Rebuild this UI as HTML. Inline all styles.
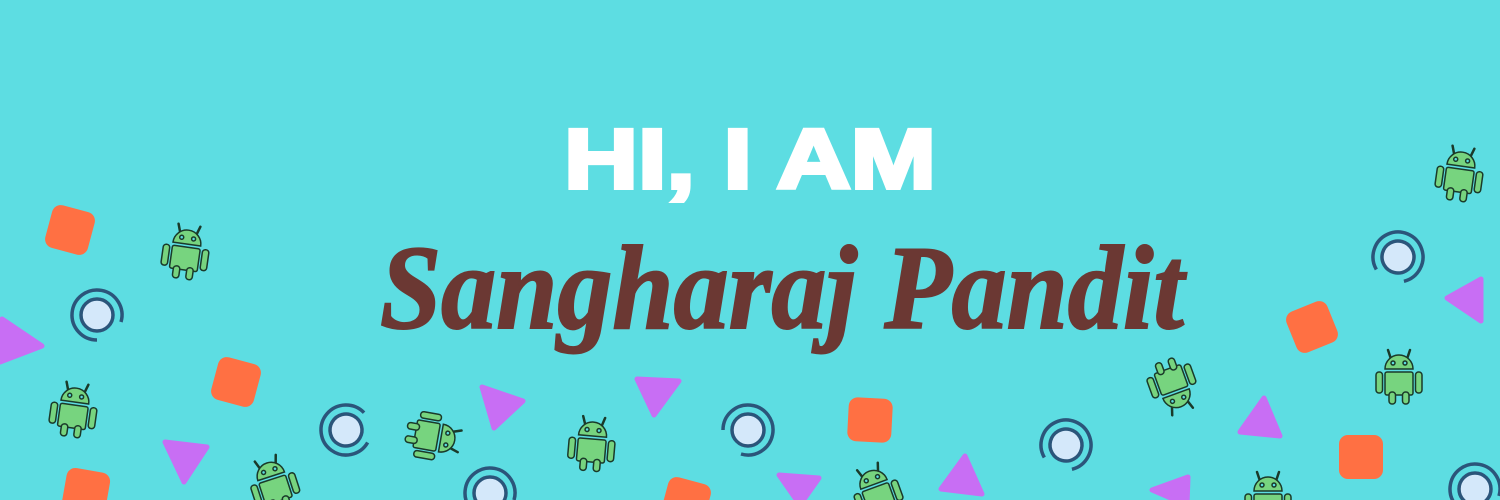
<!DOCTYPE html>
<html><head><meta charset="utf-8"><style>
html,body{margin:0;padding:0;width:1500px;height:500px;overflow:hidden;background:#5ddde2}
svg{display:block;overflow:hidden}
</style></head><body>
<svg width="1500" height="500" viewBox="0 0 1500 500" xmlns="http://www.w3.org/2000/svg">
<defs>
<g id="and" fill="#77d47f" stroke="#1a3a2a" stroke-width="1.5">
  <line x1="-8" y1="-16" x2="-11" y2="-25" stroke-linecap="round" stroke-width="2.5"/>
  <line x1="8" y1="-16" x2="11" y2="-25" stroke-linecap="round" stroke-width="2.5"/>
  <path d="M-14,-6 A14,14 0 0 1 14,-6 Z"/>
  <circle cx="-6" cy="-12" r="2" fill="#5ddde2"/>
  <circle cx="6" cy="-12" r="2" fill="#5ddde2"/>
  <rect x="-14" y="-3" width="28" height="23" rx="2"/>
  <rect x="-23" y="-3" width="6.5" height="21" rx="3"/>
  <rect x="16.5" y="-3" width="6.5" height="21" rx="3"/>
  <rect x="-10" y="17" width="6.5" height="12" rx="3"/>
  <rect x="3.5" y="17" width="6.5" height="12" rx="3"/>
</g>
<g id="sq"><rect x="-22" y="-22" width="44" height="44" rx="9" fill="#ff7043"/></g>
<g id="ring" fill="none" stroke="#2b557a" stroke-width="3.5">
  <path d="M0,25 A25,25 0 1 1 24,7"/>
  <circle r="16" fill="#d4e8fa"/>
</g>
</defs>

<g fill="#c86ef4" stroke="#c86ef4" stroke-width="5" stroke-linejoin="round">
  <path d="M2,319 L42,346 L0,362 Z"/>
  <path d="M165,442 L207,447 L184,482 Z"/>
  <path d="M482,387 L523,401 L494,428 Z"/>
  <path d="M637,379 L679,381 L654,415 Z"/>
  <path d="M779,475 L819,478 L800,505 Z"/>
  <path d="M965,456 L982,494 L941,489 Z"/>
  <path d="M1188,477 L1152,490 L1187,505 Z"/>
  <path d="M1264,398 L1280,436 L1240,432 Z"/>
  <path d="M1481,279 L1481,321 L1447,298 Z"/>
</g>

<use href="#sq" transform="translate(70,230) rotate(15)"/>
<use href="#sq" transform="translate(236,382) rotate(15)"/>
<use href="#sq" transform="translate(86,492) rotate(10)"/>
<use href="#sq" transform="translate(870,420) rotate(3)"/>
<use href="#sq" transform="translate(686,502) rotate(15)"/>
<use href="#sq" transform="translate(1312,327) rotate(-22)"/>
<use href="#sq" transform="translate(1361,457)"/>

<use href="#ring" transform="translate(97,315) rotate(0)"/>
<use href="#ring" transform="translate(346,430) rotate(-60)"/>
<use href="#ring" transform="translate(748,430) rotate(90)"/>
<use href="#ring" transform="translate(1066,445) rotate(60)"/>
<use href="#ring" transform="translate(1398,257) rotate(60)"/>
<use href="#ring" transform="translate(490,493) rotate(0)"/>
<use href="#ring" transform="translate(1475,489) rotate(0)"/>

<use href="#and" transform="translate(186,250) rotate(8)"/>
<use href="#and" transform="translate(74,408) rotate(8)"/>
<use href="#and" transform="translate(273,482) rotate(-18)"/>
<use href="#and" transform="translate(435,437) rotate(100)"/>
<use href="#and" transform="translate(592,442) rotate(5)"/>
<use href="#and" transform="translate(876,490) rotate(-20)"/>
<use href="#and" transform="translate(1174,388) rotate(160)"/>
<use href="#and" transform="translate(1399,375)"/>
<use href="#and" transform="translate(1460,172) rotate(8)"/>
<use href="#and" transform="translate(1268,497)"/>

<text x="564" y="188" textLength="372" lengthAdjust="spacingAndGlyphs" font-family="Liberation Sans, sans-serif" font-weight="bold" font-size="84" fill="#ffffff" stroke="#ffffff" stroke-width="4">HI, I AM</text>
<text x="380" y="328" textLength="804" lengthAdjust="spacingAndGlyphs" font-family="Liberation Serif, serif" font-weight="bold" font-style="italic" font-size="120" fill="#6b3833" stroke="#6b3833" stroke-width="2">Sangharaj Pandit</text>
</svg>
</body></html>
